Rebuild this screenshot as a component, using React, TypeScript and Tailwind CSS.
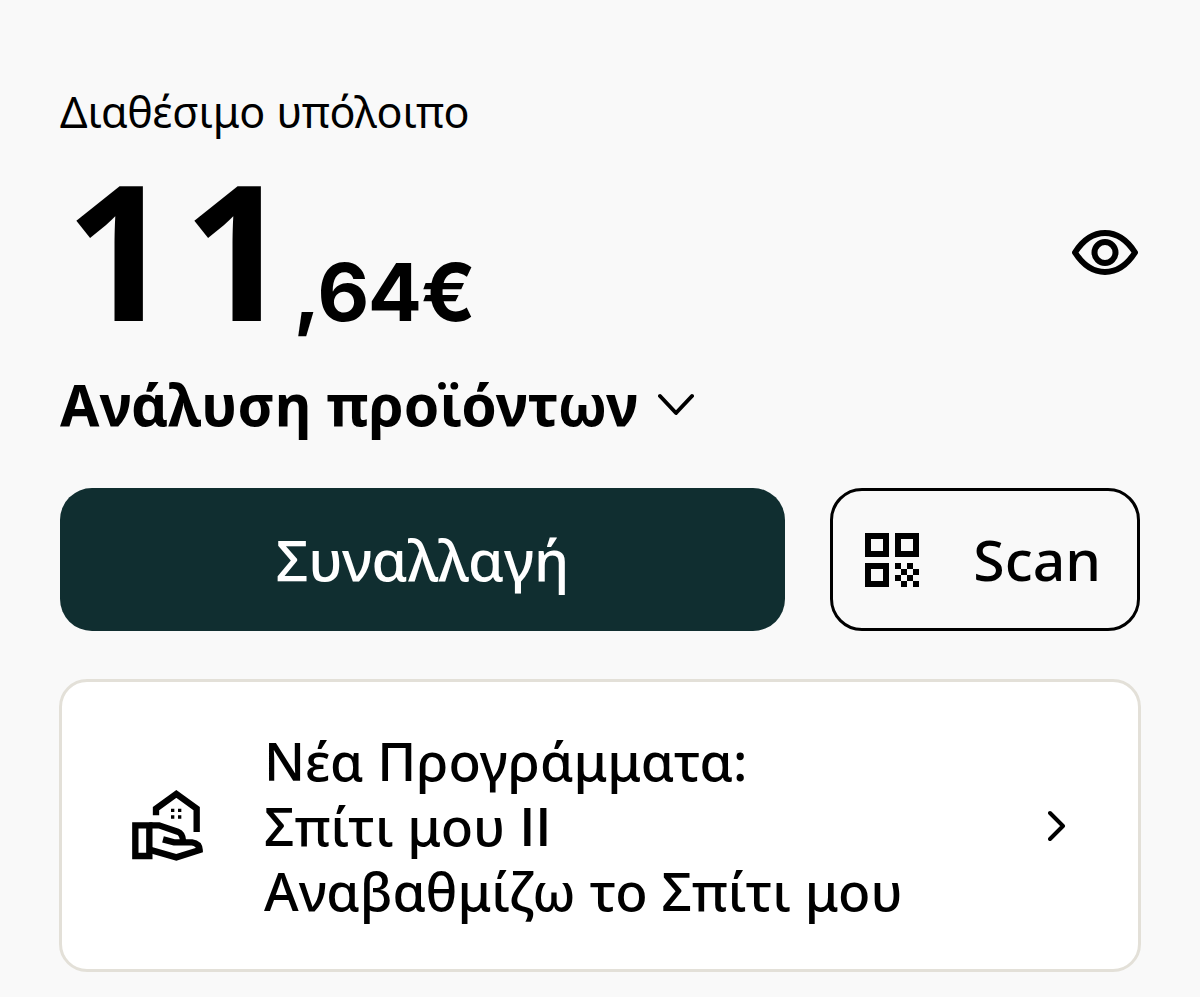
import { useState } from 'react'

function EyeIcon() {
  return (
    <svg className="h-[45px] w-[66px]" viewBox="0 0 66 45" fill="none" stroke="currentColor" strokeWidth="6" strokeLinejoin="round">
      <path d="M3 22.500C11 10 21 3 33 3s22 7 30 19.500C55 35 45 42 33 42S11 35 3 22.500Z" />
      <circle cx="33" cy="22.500" r="10.500" />
    </svg>
  )
}

function QrIcon() {
  return (
    <svg className="size-[54px] shrink-0" viewBox="0 0 9 9" fill="currentColor" shapeRendering="crispEdges">
      <path fillRule="evenodd" d="M0 0h4v4H0zM1 1v2h2V1zM5 0h4v4H5zM6 1v2h2V1zM0 5h4v4H0zM1 6v2h2V6z" />
      <path d="M5 5h1v1H5zM7 5h1v1H7zM6 6h1v1H6zM8 6h1v1H8zM5 7h1v1H5zM7 7h1v1H7zM6 8h1v1H6zM8 8h1v1H8z" />
    </svg>
  )
}

function HouseHandIcon() {
  return (
    <svg className="size-[72px] shrink-0" viewBox="66 48 216 216" fill="none" stroke="currentColor" strokeWidth="19">
      {/* house */}
      <path d="M138 124V104L199 60L260 104V174" />
      <path fill="currentColor" stroke="none" d="M183 104h10v10h-10zM204 104h10v10h-10zM183 124h10v10h-10zM204 124h10v10h-10z" />
      {/* hand */}
      <path d="M76 154H118V246H76Z" />
      <path d="M118 154H147L203 173Q218 179 219 200" />
      <path d="M159 196L192 205H246Q268 208 269 228L199 250L118 227" />
    </svg>
  )
}

export default function App() {
  const [hidden, setHidden] = useState(false)
  const [open, setOpen] = useState(false)
  const euros = hidden ? '••' : '11'

  return (
    <main className="min-h-screen bg-[#f9f9f9] px-[60px] pt-20 pb-6 font-['Noto_Sans','Open_Sans',sans-serif] text-black">
      <p className="text-[43px] leading-[64px]">Διαθέσιμο υπόλοιπο</p>

      {/* Balance */}
      <div className="flex h-[212px] items-center justify-between pt-1">
        <p className="flex items-baseline pb-2 leading-none font-bold">
          <span className="flex text-[188px]">
            {euros.split('').map((digit, i) => <span key={i} className="w-[118px] text-center">{digit}</span>)}
          </span>
          <span className="font-['Inter',sans-serif] text-[80px] tabular-nums">{hidden ? '' : ',64€'}</span>
        </p>
        <button type="button" aria-label="Απόκρυψη υπολοίπου" aria-pressed={hidden} onClick={() => setHidden(!hidden)} className="mr-[2px]">
          <EyeIcon />
        </button>
      </div>

      <button type="button" aria-expanded={open} onClick={() => setOpen(!open)} className="flex items-center gap-5 text-[57px] leading-[96px] font-bold">
        Ανάλυση προϊόντων
        <svg className="h-6 w-9" viewBox="0 0 36 24" fill="none" stroke="currentColor" strokeWidth="4" strokeLinecap="round" strokeLinejoin="round">
          <path d="M2 4L18 21L34 4" />
        </svg>
      </button>

      {/* Actions */}
      <div className="mt-9 flex gap-[45px] text-[57px] font-medium">
        <button type="button" className="h-[143px] flex-1 rounded-[32px] bg-[#102e30] text-white">Συναλλαγή</button>
        <button type="button" className="flex h-[143px] w-[310px] items-center justify-between rounded-[32px] border-3 border-black pr-9 pl-8">
          <QrIcon />
          Scan
        </button>
      </div>

      {/* Housing programmes */}
      <a href="#programs" className="-mx-px mt-12 flex items-center rounded-[28px] border-3 border-[#e3e0d8] bg-white px-[70px] py-[46px] text-[53px] leading-[65px] font-medium">
        <HouseHandIcon />
        <p className="ml-[60px] flex-1">
          Νέα Προγράμματα:<br />
          Σπίτι μου <span className="font-['Open_Sans',sans-serif] font-semibold">II</span><br />
          Αναβαθμίζω το Σπίτι μου
        </p>
        <svg className="h-8 w-5" viewBox="0 0 20 32" fill="none" stroke="currentColor" strokeWidth="4" strokeLinecap="round" strokeLinejoin="round">
          <path d="M2 3L15 16L2 29" />
        </svg>
      </a>
    </main>
  )
}
